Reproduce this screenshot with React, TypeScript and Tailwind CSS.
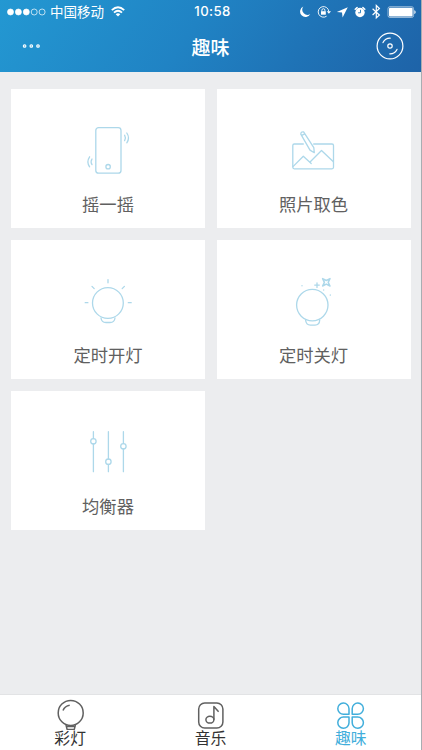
import type { ReactNode } from "react";

const StatusBar = () => {
  return (
    <div className="relative flex h-6 items-center justify-center text-white">
      <div className="absolute left-[7px] top-0 flex h-6 items-center">
        <svg width="39" height="8" viewBox="0 0 39 8" stroke="white" strokeWidth="0.7">
          <circle cx="3.5" cy="4" r="3" fill="white" />
          <circle cx="11.4" cy="4" r="3" fill="white" />
          <circle cx="19.3" cy="4" r="3" fill="white" />
          <circle cx="27.2" cy="4" r="3" fill="none" />
          <circle cx="35.1" cy="4" r="3" fill="none" />
        </svg>
        <span className="ml-1 text-[13.5px] leading-none">中国移动</span>
        <svg className="ml-[7px] mb-0.5" width="14" height="11" viewBox="0 0 14 11" fill="none" stroke="white" strokeWidth="1.8">
          <path d="M.8 4.2Q7-1.8 13.2 4.2M3 6.7Q7 2.9 11 6.7" />
          <path d="M4.7 8.2Q7 6.2 9.3 8.2L7 10.6z" fill="white" stroke="none" />
        </svg>
      </div>

      <span className="ml-1 font-['Inter'] text-[13.2px] font-medium leading-none tracking-[0.4px]">10:58</span>

      {/* Moon, rotation lock, location, alarm, bluetooth, battery */}
      <svg className="absolute left-[298px] top-0" width="120" height="24" viewBox="0 0 120 24" fill="none" stroke="white">
        <path d="M5.3 6.6A5.4 5.4 0 1 0 12.3 14 5.2 5.2 0 0 1 5.3 6.6z" fill="white" stroke="none" />
        <path d="M28.6 16.2A5.3 5.3 0 1 1 30.8 11.5" strokeWidth="0.9" />
        <path d="M28.8 11.2h4.2l-2.1 2.6z" fill="white" stroke="none" />
        <path d="M23 11.2h4.8v3.5H23z" fill="white" stroke="none" />
        <path d="M23.9 11.2v-1a1.5 1.5 0 0 1 3 0v1" strokeWidth="0.9" />
        <path d="M49.8 7.2L38.8 11.9l5.2.5.6 5z" fill="white" stroke="none" />
        <circle cx="62" cy="12.5" r="4.7" fill="white" stroke="none" />
        <path d="M57.2 9.3l1.9-1.7M66.8 9.3l-1.9-1.7" strokeWidth="1.5" strokeLinecap="round" />
        <path d="M62.5 9.8v3h-2.4" stroke="#2179ba" strokeWidth=".9" />
        <path d="M74.6 8.8l6.8 6.2-3.1 2.9V5.5l3.1 3L74.6 15" strokeWidth="1.2" />
        <rect x="90" y="6.7" width="25.6" height="10.8" rx="2" strokeOpacity=".65" strokeWidth=".8" />
        <rect x="91" y="7.7" width="23.6" height="8.8" rx="1" fill="white" stroke="none" />
        <path d="M116.4 10.2c1.6.4 1.6 3.4 0 3.8z" fill="white" stroke="none" />
      </svg>
    </div>
  );
};

const Header = () => {
  return (
    <header className="h-[72px] bg-[linear-gradient(125deg,#2398d2_0%,#2083c4_45%,#1f74b7_70%,#1e63a8_100%)] text-white">
      <StatusBar />
      <div className="grid h-12 grid-cols-[1fr_auto_1fr] items-center pb-1 pl-[22px] pr-[17px]">
        <svg width="28" height="6" viewBox="0 0 28 6" fill="white" fillOpacity=".35" stroke="white" strokeWidth="1.1">
          <circle cx="2.6" cy="3" r="1.3" />
          <circle cx="9.3" cy="3" r="1.3" />
          <circle cx="16" cy="3" r="1.3" />
        </svg>
        <h1 className="mr-[5px] text-[19px] font-medium leading-none">趣味</h1>
        <svg className="justify-self-end" width="28" height="28" viewBox="0 0 28 28" fill="none" stroke="white" strokeWidth="1.2" strokeLinecap="round">
          <circle cx="14" cy="14" r="12.9" />
          <circle cx="14" cy="14" r="2.2" />
          <path d="M7 10.6A7.8 7.8 0 0 1 14.2 6.2M21 17.4A7.8 7.8 0 0 1 13.8 21.8" />
        </svg>
      </div>
    </header>
  );
};

const features: { label: string; icon: ReactNode }[] = [
  {
    label: "摇一摇",
    icon: (
      <>
        <rect x="17.8" y="3.6" width="25.2" height="45.6" rx="2.8" />
        <circle cx="30.1" cy="42.7" r="2.2" />
        <path d="M46.6 11.2Q48.2 13.9 46.6 16.6M48.8 9Q52.2 13.9 48.8 18.8" />
        <path d="M14 35Q12.2 37.8 14 40.6M11.6 32.8Q8.2 37.8 11.6 42.8" />
      </>
    ),
  },
  {
    label: "照片取色",
    icon: (
      <>
        <path d="M19.3 20H10.3Q8.8 20 8.8 21.5V43.3Q8.8 44.8 10.3 44.8H48Q49.5 44.8 49.5 43.3V21.5Q49.5 20 48 20H29.7" />
        <path d="M9 42.6L19.3 32.2L27.2 39.5M25.8 38.3L37.5 26.5L49.4 37.8" />
        <path d="M16.8 10.2Q16.8 7.4 19.6 7.9L29.8 23.6L30.3 28.7L26 26.1zM17.7 11.4L20.8 9.9" />
      </>
    ),
  },
  {
    label: "定时开灯",
    icon: (
      <>
        <circle cx="29.9" cy="28" r="15.4" />
        <path d="M23 43Q23.5 47.5 28 47.5H32Q36.5 47.5 37 43" />
        <path d="M30 4.6V7.8M14 11.4L16.2 13.6M46.4 11.4L44.2 13.6M7.2 27.7H9.9M50.3 27.7H53.2" />
      </>
    ),
  },
  {
    label: "定时关灯",
    icon: (
      <>
        <circle cx="28.3" cy="30.1" r="15.7" />
        <path d="M21.6 45Q22 50.1 26.5 50.1H31Q35.5 50.1 35.7 45" />
        <path d="M38.6 3.6L42.3 5.5L46 3.6L44.2 7.3L46 11L42.3 9.1L38.6 11L40.4 7.3z" strokeWidth="1.5" />
        <path d="M33 7.8V12.4M30.7 10.1H35.3M18 10.6V10.8M39.7 14.9V15.1M46.3 20V20.2" />
      </>
    ),
  },
  {
    label: "均衡器",
    icon: (
      <>
        <path d="M15.4 5.7V12.6M15.4 18V45.7M30.4 5.7V33M30.4 38.4V45.7M45.4 5.7V17.6M45.4 23V45.7" />
        <circle cx="15.4" cy="15.3" r="2.7" />
        <circle cx="30.4" cy="35.7" r="2.7" />
        <circle cx="45.4" cy="20.3" r="2.7" />
      </>
    ),
  },
];

const tabs: { label: string; active?: boolean; icon: ReactNode }[] = [
  {
    label: "彩灯",
    icon: (
      <>
        <circle cx="15.7" cy="14.9" r="12.5" />
        <path d="M8 12.6Q9.7 8.2 14.7 7.3M11 27L12.1 31.4H19.3L20.4 27M11.8 28.4H19.6" />
      </>
    ),
  },
  {
    label: "音乐",
    icon: (
      <>
        <rect x="3.7" y="5" width="24.2" height="25" rx="6" />
        <ellipse cx="14.9" cy="21.7" rx="4" ry="3.4" />
        <path d="M18.9 21.7V8.6L23.6 13.8" />
      </>
    ),
  },
  {
    label: "趣味",
    active: true,
    icon: (
      <>
        <path d="M14 16.3H8.6A5.6 5.6 0 1 1 14 10.7z" />
        <path d="M17.2 16.3H22.6A5.6 5.6 0 1 0 17.2 10.7z" />
        <path d="M14 19.1H8.6A5.6 5.6 0 1 0 14 24.7z" />
        <path d="M17.2 19.1H22.6A5.6 5.6 0 1 1 17.2 24.7z" />
      </>
    ),
  },
];

const FeatureCard = ({ label, icon }: { label: string; icon: ReactNode }) => {
  return (
    <div className="flex h-[139px] flex-col items-center bg-white pt-[35px]">
      <svg width="60" height="56" viewBox="0 0 60 56" fill="none" stroke="#add8ea" strokeWidth="1.3" strokeLinecap="round" strokeLinejoin="round">
        {icon}
      </svg>
      <span className="mt-[15px] text-[17.3px] leading-[18px] text-[#606060]">{label}</span>
    </div>
  );
};

const TabBar = () => {
  return (
    <nav className="grid h-14 grid-cols-3 border-t border-[#e2e3e5] bg-white">
      {tabs.map((tab) => (
        <div
          key={tab.label}
          className={`flex flex-col items-center pt-[3px] ${tab.active ? "text-[#41aedb]" : "text-[#333333]"}`}
        >
          <svg
            className={tab.active ? "" : "text-[#606060]"}
            width="31"
            height="32"
            viewBox="0 0 31 32"
            fill="none"
            stroke="currentColor"
            strokeWidth="1.5"
            strokeLinejoin="round"
          >
            {tab.icon}
          </svg>
          <span className="text-[15.8px] leading-4">{tab.label}</span>
        </div>
      ))}
    </nav>
  );
};

const App = () => {
  return (
    <div className="flex h-[750px] w-[422px] flex-col overflow-hidden border-r border-[#a9adb2] bg-[#ecedef] font-['Noto_Sans_CJK_SC',sans-serif]">
      <Header />
      <main className="grid flex-1 grid-cols-2 content-start gap-x-[11.5px] gap-y-3 pl-[11px] pr-[10.5px] pt-[17px]">
        {features.map((feature) => (
          <FeatureCard key={feature.label} label={feature.label} icon={feature.icon} />
        ))}
      </main>
      <TabBar />
    </div>
  );
};

export default App;
